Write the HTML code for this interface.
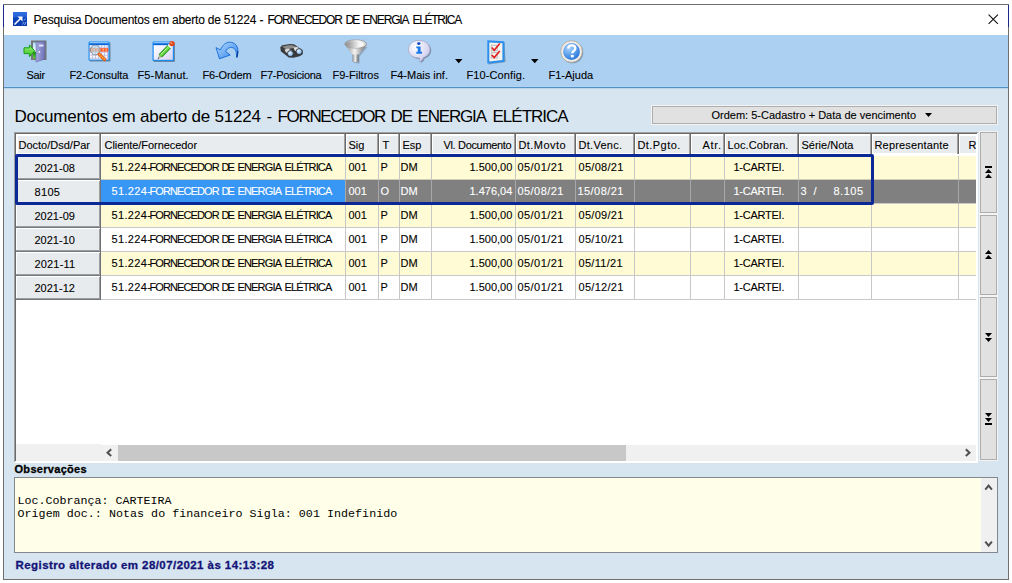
<!DOCTYPE html>
<html><head><meta charset="utf-8"><title>Pesquisa</title><style>
*{margin:0;padding:0;box-sizing:border-box}
html,body{width:1012px;height:583px;background:#fff;overflow:hidden}
body{position:relative;font-family:"Liberation Sans",sans-serif}
.a{position:absolute}
.t{position:absolute;white-space:pre;line-height:1;-webkit-text-stroke:0.1px currentColor}
svg{position:absolute;overflow:visible}
</style></head><body>
<div class="a" style="left:3px;top:4px;width:1006px;height:576px;background:#6f6f6f;"></div>
<div class="a" style="left:4px;top:5px;width:1004px;height:574px;background:#ffffff;"></div>
<div class="a" style="left:3px;top:5px;width:1px;height:22px;background:#1c2a8a;"></div>
<div class="a" style="left:1008px;top:5px;width:1px;height:22px;background:#1c2a8a;"></div>
<svg style="left:13px;top:12px" width="14" height="14" viewBox="0 0 14 14">
<defs><linearGradient id="gTi" x1="0" y1="0" x2="0" y2="1"><stop offset="0" stop-color="#2e6fe0"/><stop offset="0.3" stop-color="#2a62d8"/><stop offset="0.45" stop-color="#0a44b8"/><stop offset="1" stop-color="#0a3aa8"/></linearGradient></defs><rect x="0" y="0" width="14" height="14" fill="url(#gTi)"/>
<path d="M1.5 12.5 L8.5 5.5" stroke="#fff" stroke-width="1.6"/><path d="M4.5 4.5 H9.5 V9.5 Z" fill="#fff"/>
<path d="M9.5 12.5 l1.5 -2.5 M11.5 13 l1.5 -3 M11 8.5 l1.5 -2" stroke="#8aaae8" stroke-width="1"/>
</svg>
<div class="t" style="left:33.5px;top:14px;font-size:12px;color:#000;font-weight:400;letter-spacing:-0.216px;font-family:'Liberation Sans';">Pesquisa Documentos em aberto de 51224</div>
<div class="t" style="left:259.5px;top:14px;font-size:12px;color:#000;font-weight:400;letter-spacing:0.000px;font-family:'Liberation Sans';">-</div>
<div class="t" style="left:267.5px;top:14px;font-size:12px;color:#000;font-weight:400;letter-spacing:-1.111px;font-family:'Liberation Sans';">FORNECEDOR</div>
<div class="t" style="left:345.5px;top:14px;font-size:12px;color:#000;font-weight:400;letter-spacing:-2.000px;font-family:'Liberation Sans';">DE</div>
<div class="t" style="left:362.5px;top:14px;font-size:12px;color:#000;font-weight:400;letter-spacing:-1.167px;font-family:'Liberation Sans';">ENERGIA</div>
<div class="t" style="left:412.5px;top:14px;font-size:12px;color:#000;font-weight:400;letter-spacing:-1.286px;font-family:'Liberation Sans';">ELÉTRICA</div>
<svg style="left:988px;top:14px" width="11" height="11" viewBox="0 0 11 11"><path d="M0.6 0.6 L9.9 9.9 M9.9 0.6 L0.6 9.9" stroke="#111" stroke-width="1.1"/></svg>
<div class="a" style="left:4px;top:35px;width:1004px;height:52px;background:#acd0f2;"></div>
<div class="a" style="left:4px;top:86px;width:1004px;height:1px;background:#b2d3f2;"></div>
<div class="a" style="left:4px;top:87px;width:1004px;height:1px;background:#4f92ca;"></div>
<div class="a" style="left:4px;top:88px;width:1004px;height:1px;background:#b9d5ec;"></div>
<div class="a" style="left:4px;top:89px;width:1004px;height:490px;background:#d6e5ef;"></div>
<svg style="left:0;top:0" width="1012" height="90" viewBox="0 0 1012 90">
<defs>
<linearGradient id="gGreen" x1="0" y1="0" x2="0" y2="1"><stop offset="0" stop-color="#9af07a"/><stop offset="1" stop-color="#3cc020"/></linearGradient>
<linearGradient id="gDoor" x1="0" y1="0" x2="1" y2="0"><stop offset="0" stop-color="#a4a8e0"/><stop offset="1" stop-color="#6e72b8"/></linearGradient>
<linearGradient id="gWin" x1="0" y1="0" x2="1" y2="1"><stop offset="0" stop-color="#ffffff"/><stop offset="1" stop-color="#d8d4f4"/></linearGradient>
<linearGradient id="gSky" x1="0" y1="0" x2="0" y2="1"><stop offset="0" stop-color="#a8e0ff"/><stop offset="0.55" stop-color="#ffffff"/><stop offset="0.6" stop-color="#1a8a10"/><stop offset="1" stop-color="#60d040"/></linearGradient>
<linearGradient id="gPencil" x1="0" y1="0" x2="1" y2="1"><stop offset="0" stop-color="#9cf080"/><stop offset="1" stop-color="#2a9a18"/></linearGradient>
<linearGradient id="gArrow" x1="0" y1="0" x2="1" y2="1"><stop offset="0" stop-color="#b8dcff"/><stop offset="1" stop-color="#2a80e8"/></linearGradient>
<linearGradient id="gFunnel" x1="0" y1="0" x2="1" y2="0"><stop offset="0" stop-color="#8a8a8a"/><stop offset="0.45" stop-color="#f4f4f4"/><stop offset="1" stop-color="#6a6a6a"/></linearGradient>
<linearGradient id="gFunTop" x1="0" y1="0" x2="1" y2="0"><stop offset="0" stop-color="#9a9a9a"/><stop offset="0.6" stop-color="#ffffff"/><stop offset="1" stop-color="#c8c8c8"/></linearGradient>
<linearGradient id="gFunIn" x1="0" y1="0" x2="1" y2="0"><stop offset="0" stop-color="#8c8c8c"/><stop offset="0.7" stop-color="#f0f0f0"/><stop offset="1" stop-color="#ffffff"/></linearGradient>
<radialGradient id="gHelp" cx="0.35" cy="0.3" r="0.8"><stop offset="0" stop-color="#a8d4ff"/><stop offset="1" stop-color="#1e6fd8"/></radialGradient>
<radialGradient id="gLens" cx="0.4" cy="0.35" r="0.7"><stop offset="0" stop-color="#e8f4ff"/><stop offset="1" stop-color="#6aa8e8"/></radialGradient>
<radialGradient id="gBubble" cx="0.35" cy="0.3" r="0.8"><stop offset="0" stop-color="#ffffff"/><stop offset="1" stop-color="#c4c4ec"/></radialGradient>
</defs>
<!-- Sair -->
<path d="M31 40.5 H46.5 V60 H31 Z" fill="#777"/>
<rect x="33" y="42.5" width="11.5" height="16" fill="url(#gSky)"/>
<path d="M36 42.2 L44.8 41.2 L44.8 59 L36 62 Z" fill="url(#gDoor)" stroke="#5a5ea0" stroke-width="0.5"/>
<rect x="39" y="44.5" width="4.5" height="2" fill="#e4e6ff"/>
<circle cx="39.3" cy="52" r="1" fill="#e8e8f0"/>
<path d="M24 47.8 H29.4 V44.9 L34.7 50.9 L29.4 56.7 V53.6 H24 Z" fill="url(#gGreen)" stroke="#12a012" stroke-width="1"/>
<!-- F2 Consulta -->
<rect x="89.5" y="42.5" width="21" height="19" rx="1" fill="#203040" fill-opacity="0.45"/>
<rect x="88.5" y="41.5" width="21" height="19" rx="1.2" fill="#1a8cf4"/>
<rect x="89.7" y="42.4" width="18.6" height="1" fill="#cfe8ff"/>
<rect x="89.7" y="43.4" width="18.6" height="1.8" fill="#0a64d8"/>
<rect x="89.7" y="45.2" width="18.6" height="14.3" fill="#fbfaff"/>
<path d="M89.7 47.2 H108.3 M89.7 52.2 H108.3 M89.7 55.2 H108.3 M89.7 58.2 H108.3 M92.5 45.2 V59.5 M95.5 45.2 V59.5 M98.5 45.2 V59.5 M101.5 45.2 V59.5 M104.5 45.2 V59.5 M107.5 45.2 V59.5" stroke="#c4c0e4" stroke-width="1"/>
<rect x="89.7" y="48.2" width="18.6" height="3.4" fill="#ff5a24"/>
<path d="M90.5 49.9 H108" stroke="#ffc8a0" stroke-width="1.3" stroke-dasharray="1.5 1.5"/>
<circle cx="95.3" cy="50" r="4.8" fill="#b4e0f4" fill-opacity="0.6" stroke="#8c8c8c" stroke-width="0.9"/>
<path d="M99.2 54.2 L104.6 59.6" stroke="#e85a10" stroke-width="3.3" stroke-linecap="round"/>
<path d="M99.2 54.2 L104.6 59.6" stroke="#ffd84a" stroke-width="1.4" stroke-dasharray="1.2 1"/>
<!-- F5 Manut -->
<rect x="153.5" y="42.5" width="21.5" height="19.5" rx="1" fill="#203040" fill-opacity="0.45"/>
<rect x="152.5" y="41.5" width="21.5" height="19.5" rx="1.2" fill="#1a8cf4"/>
<rect x="153.7" y="42.4" width="19.1" height="1" fill="#cfe8ff"/>
<rect x="153.7" y="43.4" width="19.1" height="1.8" fill="#0a64d8"/>
<rect x="153.7" y="45.2" width="19.1" height="14.6" fill="url(#gWin)"/>
<path d="M157.6 59.2 L159.2 54.6 L161.6 57 Z" fill="#b8b0a0"/>
<path d="M157.6 59.2 L158.3 57.4 L159.3 58.4 Z" fill="#505050"/>
<path d="M160.3 55.8 L169.6 46.4" stroke="#1a8a12" stroke-width="4.6"/>
<path d="M160.3 55.8 L169.6 46.4" stroke="#6ee048" stroke-width="2.8"/>
<path d="M160.8 54.3 L168.6 46.2" stroke="#c0f8a8" stroke-width="0.9"/>
<path d="M169.2 46.8 L171 45" stroke="#f0f0f0" stroke-width="4.6"/>
<circle cx="172" cy="43.6" r="2.7" fill="#e04818"/>
<circle cx="171.4" cy="43" r="1" fill="#ff9070"/>
<!-- F6 Ordem -->
<path d="M219.5 58.8 L216 47.6 L220.4 49.9 C222.5 45 226 42.2 229.7 42.2 C234.5 42.2 238 46 237.9 50.4 C237.8 53 237.3 55 236.6 57.2 C236.5 52 235.8 49.5 233.8 48.3 C231.5 46.8 227.5 47.2 225.6 51.4 L230.2 55 Z" fill="url(#gArrow)" stroke="#1466d8" stroke-width="0.9" stroke-linejoin="round"/>
<path d="M237.8 51 C237.8 53.5 237.5 55.5 236.8 57.5" stroke="#0a3c9a" stroke-width="1.2" fill="none"/>
<!-- F7 Posiciona -->
<path d="M280.3 47.2 L282.2 45.2 L290 43.9 L294 44.2 L302.6 50.2 L302.8 54.2 L299.6 56.2 L293.4 57.8 L288.8 57.6 L280.8 51.2 Z" fill="#3a3a3a"/>
<path d="M282 46.4 L290 45.1 L293.6 45.5 L296.5 47.3 L286.5 49.4 Z" fill="#8e8e8e"/>
<path d="M284.6 49.6 L288.4 48.6 L292.2 51.2 L289.6 54.4 L285.6 52 Z" fill="#d8d8d8"/>
<path d="M293.4 47.6 L297.2 46.9 L300.6 49.4 L298 52.6 L294.6 50.2 Z" fill="#e4e4e4"/>
<circle cx="290.4" cy="53.6" r="3" fill="url(#gLens)" stroke="#2a2a2a" stroke-width="0.8"/>
<circle cx="299.1" cy="51.6" r="3" fill="url(#gLens)" stroke="#2a2a2a" stroke-width="0.8"/>
<!-- F9 Filtros -->
<path d="M345.5 45 L353 55.5 L353 62 L358.5 62.5 L358.5 55.5 L366.5 46 Z" fill="#555" fill-opacity="0.35" transform="translate(1 1)"/>
<path d="M345 44.5 L352.5 55 L358.5 55 L366.5 45 Z" fill="url(#gFunnel)"/>
<rect x="352.5" y="54.5" width="6" height="7.5" fill="url(#gFunnel)"/>
<ellipse cx="355.7" cy="44" rx="11" ry="4.2" fill="url(#gFunTop)" stroke="#8a8a8a" stroke-width="0.6"/>
<ellipse cx="355" cy="44.3" rx="9" ry="3" fill="url(#gFunIn)"/>
<!-- F4 Mais inf -->
<path d="M419 40.5 C426 40.5 430 44.5 430 49.5 C430 53.5 427 56.5 423.5 57.5 C423 59.5 421.5 61 419.5 62 C420 60.5 420 59 419.5 58 C413 58 408.5 54.5 408.5 49.5 C408.5 44.5 412.5 40.5 419 40.5 Z" fill="#404058" fill-opacity="0.45" transform="translate(1.2 1)"/>
<path d="M419 40.5 C426 40.5 430 44.5 430 49.5 C430 53.5 427 56.5 423.5 57.5 C423 59.5 421.5 61 419.5 62 C420 60.5 420 59 419.5 58 C413 58 408.5 54.5 408.5 49.5 C408.5 44.5 412.5 40.5 419 40.5 Z" fill="url(#gBubble)" stroke="#9a9ab8" stroke-width="0.6"/>
<ellipse cx="418.8" cy="43.6" rx="1.7" ry="1.3" fill="#0a48b8"/>
<path d="M416.3 46.4 H420.6 V51.8 H422 V53.8 H416.3 V51.8 H417.8 V48.3 H416.3 Z" fill="#1a78e8"/>
<!-- F10 Config -->
<path d="M488.5 41.5 L504.5 42.5 L505.5 62 L488.5 64.5 Z" fill="#203040" fill-opacity="0.35"/>
<path d="M487.3 40.3 L503.6 41.2 Q504.4 41.3 504.4 42 L504.4 61.2 Q504.4 62 503.6 62.1 L488 63.6 Q487.3 63.7 487.3 63 Z" fill="#2a90ec"/>
<path d="M489.3 42.6 L502.4 43.2 L502.4 59.9 L489.3 61.4 Z" fill="#f6f2ec"/>
<rect x="491.3" y="45.3" width="6" height="5.4" fill="none" stroke="#b8b8b8" stroke-width="0.9"/>
<rect x="491.3" y="52.6" width="6" height="5.4" fill="none" stroke="#b8b8b8" stroke-width="0.9"/>
<path d="M491.8 47.6 L494.2 50.3 L499.8 43.6 M491.8 55 L494.2 57.6 L499.8 50.9" stroke="#e01818" stroke-width="1.5" fill="none"/>
<!-- F1 Ajuda -->
<circle cx="572.5" cy="52.5" r="10.8" fill="#303030" fill-opacity="0.35"/>
<circle cx="571.5" cy="51.5" r="10.8" fill="#f2eee6" stroke="#a8a49c" stroke-width="0.8"/>
<circle cx="571.5" cy="51.5" r="8.4" fill="url(#gHelp)"/>
<path d="M568.3 48.6 C568.3 46.3 570 45.4 571.8 45.4 C573.9 45.4 575.3 46.6 575.3 48.4 C575.3 50.8 572.4 51 572.3 53.3" stroke="#fff" stroke-width="2.4" fill="none"/>
<rect x="570.9" y="54.9" width="2.8" height="2.5" fill="#fff"/>
</svg>
<div class="t" style="left:26.5px;top:70px;font-size:11px;color:#000;font-weight:400;letter-spacing:-0.333px;font-family:'Liberation Sans';">Sair</div>
<div class="t" style="left:69.5px;top:70px;font-size:11px;color:#000;font-weight:400;letter-spacing:-0.100px;font-family:'Liberation Sans';">F2-Consulta</div>
<div class="t" style="left:137.5px;top:70px;font-size:11px;color:#000;font-weight:400;letter-spacing:0.125px;font-family:'Liberation Sans';">F5-Manut.</div>
<div class="t" style="left:202.5px;top:70px;font-size:11px;color:#000;font-weight:400;letter-spacing:-0.143px;font-family:'Liberation Sans';">F6-Ordem</div>
<div class="t" style="left:260.5px;top:70px;font-size:11px;color:#000;font-weight:400;letter-spacing:-0.273px;font-family:'Liberation Sans';">F7-Posiciona</div>
<div class="t" style="left:332.5px;top:70px;font-size:11px;color:#000;font-weight:400;letter-spacing:0.000px;font-family:'Liberation Sans';">F9-Filtros</div>
<div class="t" style="left:390.5px;top:70px;font-size:11px;color:#000;font-weight:400;letter-spacing:0.000px;font-family:'Liberation Sans';">F4-Mais inf.</div>
<div class="t" style="left:466.5px;top:70px;font-size:11px;color:#000;font-weight:400;letter-spacing:0.100px;font-family:'Liberation Sans';">F10-Config.</div>
<div class="t" style="left:548.5px;top:70px;font-size:11px;color:#000;font-weight:400;letter-spacing:0.000px;font-family:'Liberation Sans';">F1-Ajuda</div>
<svg style="left:455px;top:59px" width="8" height="5" viewBox="0 0 8 5"><path d="M0 0 H7.5 L3.75 4.2 Z" fill="#000"/></svg>
<svg style="left:531px;top:59px" width="8" height="5" viewBox="0 0 8 5"><path d="M0 0 H7.5 L3.75 4.2 Z" fill="#000"/></svg>
<div class="t" style="left:14.5px;top:108px;font-size:17px;color:#000;font-weight:400;letter-spacing:-0.214px;font-family:'Liberation Sans';-webkit-text-stroke:0">Documentos em aberto de 51224</div>
<div class="t" style="left:266.5px;top:108px;font-size:17px;color:#000;font-weight:400;letter-spacing:0.000px;font-family:'Liberation Sans';-webkit-text-stroke:0">-</div>
<div class="t" style="left:277.5px;top:108px;font-size:17px;color:#000;font-weight:400;letter-spacing:-1.333px;font-family:'Liberation Sans';-webkit-text-stroke:0">FORNECEDOR</div>
<div class="t" style="left:390.5px;top:108px;font-size:17px;color:#000;font-weight:400;letter-spacing:-1.000px;font-family:'Liberation Sans';-webkit-text-stroke:0">DE</div>
<div class="t" style="left:417.5px;top:108px;font-size:17px;color:#000;font-weight:400;letter-spacing:-1.167px;font-family:'Liberation Sans';-webkit-text-stroke:0">ENERGIA</div>
<div class="t" style="left:492.5px;top:108px;font-size:17px;color:#000;font-weight:400;letter-spacing:-1.000px;font-family:'Liberation Sans';-webkit-text-stroke:0">ELÉTRICA</div>
<div class="a" style="left:651px;top:105px;width:347px;height:20px;background:#f4f4f4;"></div>
<div class="a" style="left:652px;top:106px;width:345px;height:18px;background:#adadad;"></div>
<div class="a" style="left:653px;top:107px;width:343px;height:16px;background:#e1e1e1;"></div>
<div class="t" style="left:711.5px;top:110px;font-size:11px;color:#000;font-weight:400;letter-spacing:0.000px;font-family:'Liberation Sans';">Ordem: 5-Cadastro + Data de vencimento</div>
<svg style="left:925px;top:113px" width="8" height="5" viewBox="0 0 8 5"><path d="M0 0 H7 L3.5 4 Z" fill="#000"/></svg>
<div class="a" style="left:14px;top:132px;width:964px;height:331px;background:#ffffff;"></div>
<div class="a" style="left:14px;top:132px;width:964px;height:1px;background:#a0a0a0;"></div>
<div class="a" style="left:14px;top:132px;width:1px;height:330px;background:#a0a0a0;"></div>
<div class="a" style="left:15px;top:133px;width:962px;height:1px;background:#6a6a6a;"></div>
<div class="a" style="left:15px;top:133px;width:1px;height:328px;background:#6a6a6a;"></div>
<div class="a" style="left:18px;top:136px;width:958px;height:17px;background:#e9ecef;"></div>
<div class="a" style="left:99px;top:134px;width:1px;height:20px;background:#a0a0a0;"></div>
<div class="a" style="left:100px;top:134px;width:1px;height:20px;background:#6a6a6a;"></div>
<div class="a" style="left:101px;top:134px;width:1px;height:20px;background:#ffffff;"></div>
<div class="a" style="left:344px;top:134px;width:1px;height:20px;background:#a0a0a0;"></div>
<div class="a" style="left:345px;top:134px;width:1px;height:20px;background:#6a6a6a;"></div>
<div class="a" style="left:346px;top:134px;width:1px;height:20px;background:#ffffff;"></div>
<div class="a" style="left:377px;top:134px;width:1px;height:20px;background:#a0a0a0;"></div>
<div class="a" style="left:378px;top:134px;width:1px;height:20px;background:#6a6a6a;"></div>
<div class="a" style="left:379px;top:134px;width:1px;height:20px;background:#ffffff;"></div>
<div class="a" style="left:398px;top:134px;width:1px;height:20px;background:#a0a0a0;"></div>
<div class="a" style="left:399px;top:134px;width:1px;height:20px;background:#6a6a6a;"></div>
<div class="a" style="left:400px;top:134px;width:1px;height:20px;background:#ffffff;"></div>
<div class="a" style="left:430px;top:134px;width:1px;height:20px;background:#a0a0a0;"></div>
<div class="a" style="left:431px;top:134px;width:1px;height:20px;background:#6a6a6a;"></div>
<div class="a" style="left:432px;top:134px;width:1px;height:20px;background:#ffffff;"></div>
<div class="a" style="left:514px;top:134px;width:1px;height:20px;background:#a0a0a0;"></div>
<div class="a" style="left:515px;top:134px;width:1px;height:20px;background:#6a6a6a;"></div>
<div class="a" style="left:516px;top:134px;width:1px;height:20px;background:#ffffff;"></div>
<div class="a" style="left:574px;top:134px;width:1px;height:20px;background:#a0a0a0;"></div>
<div class="a" style="left:575px;top:134px;width:1px;height:20px;background:#6a6a6a;"></div>
<div class="a" style="left:576px;top:134px;width:1px;height:20px;background:#ffffff;"></div>
<div class="a" style="left:633px;top:134px;width:1px;height:20px;background:#a0a0a0;"></div>
<div class="a" style="left:634px;top:134px;width:1px;height:20px;background:#6a6a6a;"></div>
<div class="a" style="left:635px;top:134px;width:1px;height:20px;background:#ffffff;"></div>
<div class="a" style="left:689px;top:134px;width:1px;height:20px;background:#a0a0a0;"></div>
<div class="a" style="left:690px;top:134px;width:1px;height:20px;background:#6a6a6a;"></div>
<div class="a" style="left:691px;top:134px;width:1px;height:20px;background:#ffffff;"></div>
<div class="a" style="left:723px;top:134px;width:1px;height:20px;background:#a0a0a0;"></div>
<div class="a" style="left:724px;top:134px;width:1px;height:20px;background:#6a6a6a;"></div>
<div class="a" style="left:725px;top:134px;width:1px;height:20px;background:#ffffff;"></div>
<div class="a" style="left:797px;top:134px;width:1px;height:20px;background:#a0a0a0;"></div>
<div class="a" style="left:798px;top:134px;width:1px;height:20px;background:#6a6a6a;"></div>
<div class="a" style="left:799px;top:134px;width:1px;height:20px;background:#ffffff;"></div>
<div class="a" style="left:870px;top:134px;width:1px;height:20px;background:#a0a0a0;"></div>
<div class="a" style="left:871px;top:134px;width:1px;height:20px;background:#6a6a6a;"></div>
<div class="a" style="left:872px;top:134px;width:1px;height:20px;background:#ffffff;"></div>
<div class="a" style="left:957px;top:134px;width:1px;height:20px;background:#a0a0a0;"></div>
<div class="a" style="left:958px;top:134px;width:1px;height:20px;background:#6a6a6a;"></div>
<div class="a" style="left:959px;top:134px;width:1px;height:20px;background:#ffffff;"></div>
<div class="t" style="left:18.5px;top:140px;font-size:11px;color:#000;font-weight:400;letter-spacing:0.000px;font-family:'Liberation Sans';">Docto/Dsd/Par</div>
<div class="t" style="left:104.5px;top:140px;font-size:11px;color:#000;font-weight:400;letter-spacing:-0.059px;font-family:'Liberation Sans';">Cliente/Fornecedor</div>
<div class="t" style="left:348.5px;top:140px;font-size:11px;color:#000;font-weight:400;letter-spacing:0.000px;font-family:'Liberation Sans';">Sig</div>
<div class="t" style="left:382.5px;top:140px;font-size:11px;color:#000;font-weight:400;letter-spacing:0.000px;font-family:'Liberation Sans';">T</div>
<div class="t" style="left:402.5px;top:140px;font-size:11px;color:#000;font-weight:400;letter-spacing:0.000px;font-family:'Liberation Sans';">Esp</div>
<div class="t" style="left:443.5px;top:140px;font-size:11px;color:#000;font-weight:400;letter-spacing:-0.333px;font-family:'Liberation Sans';">Vl. Documento</div>
<div class="t" style="left:518.5px;top:140px;font-size:11px;color:#000;font-weight:400;letter-spacing:0.429px;font-family:'Liberation Sans';">Dt.Movto</div>
<div class="t" style="left:578.5px;top:140px;font-size:11px;color:#000;font-weight:400;letter-spacing:0.286px;font-family:'Liberation Sans';">Dt.Venc.</div>
<div class="t" style="left:637.5px;top:140px;font-size:11px;color:#000;font-weight:400;letter-spacing:0.429px;font-family:'Liberation Sans';">Dt.Pgto.</div>
<div class="t" style="left:702.5px;top:140px;font-size:11px;color:#000;font-weight:400;letter-spacing:0.667px;font-family:'Liberation Sans';">Atr.</div>
<div class="t" style="left:727.5px;top:140px;font-size:11px;color:#000;font-weight:400;letter-spacing:0.100px;font-family:'Liberation Sans';">Loc.Cobran.</div>
<div class="t" style="left:801.5px;top:140px;font-size:11px;color:#000;font-weight:400;letter-spacing:0.000px;font-family:'Liberation Sans';">Série/Nota</div>
<div class="t" style="left:874.5px;top:140px;font-size:11px;color:#000;font-weight:400;letter-spacing:0.167px;font-family:'Liberation Sans';">Representante</div>
<div class="t" style="left:968.5px;top:140px;font-size:11px;color:#000;font-weight:400;letter-spacing:0.000px;font-family:'Liberation Sans';">R</div>
<div class="a" style="left:16px;top:154px;width:960px;height:290px;background:#ffffff;"></div>
<div class="a" style="left:16px;top:156px;width:84px;height:24px;background:#ffffff;"></div>
<div class="a" style="left:17px;top:157px;width:82px;height:21px;background:#e8ebee;"></div>
<div class="a" style="left:16px;top:178px;width:84px;height:1px;background:#9a9da2;"></div>
<div class="a" style="left:16px;top:179px;width:85px;height:1px;background:#74777c;"></div>
<div class="a" style="left:99px;top:157px;width:1px;height:22px;background:#a0a0a0;"></div>
<div class="a" style="left:100px;top:156px;width:1px;height:24px;background:#6f7276;"></div>
<div class="a" style="left:101px;top:156px;width:875px;height:23px;background:#fffbd4;"></div>
<div class="a" style="left:101px;top:179px;width:875px;height:1px;background:#d0ccbc;"></div>
<div class="a" style="left:345px;top:156px;width:1px;height:24px;background:#c8c8c8;"></div>
<div class="a" style="left:378px;top:156px;width:1px;height:24px;background:#c8c8c8;"></div>
<div class="a" style="left:399px;top:156px;width:1px;height:24px;background:#c8c8c8;"></div>
<div class="a" style="left:431px;top:156px;width:1px;height:24px;background:#c8c8c8;"></div>
<div class="a" style="left:515px;top:156px;width:1px;height:24px;background:#c8c8c8;"></div>
<div class="a" style="left:575px;top:156px;width:1px;height:24px;background:#c8c8c8;"></div>
<div class="a" style="left:634px;top:156px;width:1px;height:24px;background:#c8c8c8;"></div>
<div class="a" style="left:690px;top:156px;width:1px;height:24px;background:#c8c8c8;"></div>
<div class="a" style="left:724px;top:156px;width:1px;height:24px;background:#c8c8c8;"></div>
<div class="a" style="left:798px;top:156px;width:1px;height:24px;background:#c8c8c8;"></div>
<div class="a" style="left:871px;top:156px;width:1px;height:24px;background:#c8c8c8;"></div>
<div class="a" style="left:958px;top:156px;width:1px;height:24px;background:#c8c8c8;"></div>
<div class="t" style="left:34.5px;top:163px;font-size:11px;color:#000;font-weight:400;letter-spacing:0.000px;font-family:'Liberation Sans';">2021-08</div>
<div class="t" style="left:111.5px;top:162px;font-size:11px;color:#000000;font-weight:400;letter-spacing:0.333px;font-family:'Liberation Sans';">51.224-</div>
<div class="t" style="left:149.5px;top:162px;font-size:11px;color:#000000;font-weight:400;letter-spacing:-0.889px;font-family:'Liberation Sans';">FORNECEDOR</div>
<div class="t" style="left:221.5px;top:162px;font-size:11px;color:#000000;font-weight:400;letter-spacing:-2.000px;font-family:'Liberation Sans';">DE</div>
<div class="t" style="left:237.5px;top:162px;font-size:11px;color:#000000;font-weight:400;letter-spacing:-0.833px;font-family:'Liberation Sans';">ENERGIA</div>
<div class="t" style="left:284.5px;top:162px;font-size:11px;color:#000000;font-weight:400;letter-spacing:-0.857px;font-family:'Liberation Sans';">ELÉTRICA</div>
<div class="t" style="left:348.5px;top:162px;font-size:11px;color:#000000;font-weight:400;letter-spacing:0.000px;font-family:'Liberation Sans';">001</div>
<div class="t" style="left:380.5px;top:162px;font-size:11px;color:#000000;font-weight:400;letter-spacing:0.000px;font-family:'Liberation Sans';">P</div>
<div class="t" style="left:400.5px;top:162px;font-size:11px;color:#000000;font-weight:400;letter-spacing:0.000px;font-family:'Liberation Sans';">DM</div>
<div class="t" style="left:469.5px;top:162px;font-size:11px;color:#000000;font-weight:400;letter-spacing:0.000px;font-family:'Liberation Sans';">1.500,00</div>
<div class="t" style="left:517.5px;top:162px;font-size:11px;color:#000000;font-weight:400;letter-spacing:0.429px;font-family:'Liberation Sans';">05/01/21</div>
<div class="t" style="left:578.5px;top:162px;font-size:11px;color:#000000;font-weight:400;letter-spacing:0.286px;font-family:'Liberation Sans';">05/08/21</div>
<div class="t" style="left:733.5px;top:162px;font-size:11px;color:#000000;font-weight:400;letter-spacing:-0.250px;font-family:'Liberation Sans';">1-CARTEI.</div>
<div class="a" style="left:16px;top:180px;width:84px;height:24px;background:#ffffff;"></div>
<div class="a" style="left:17px;top:181px;width:82px;height:21px;background:#e8ebee;"></div>
<div class="a" style="left:16px;top:202px;width:84px;height:1px;background:#9a9da2;"></div>
<div class="a" style="left:16px;top:203px;width:85px;height:1px;background:#74777c;"></div>
<div class="a" style="left:99px;top:181px;width:1px;height:22px;background:#a0a0a0;"></div>
<div class="a" style="left:100px;top:180px;width:1px;height:24px;background:#6f7276;"></div>
<div class="a" style="left:101px;top:180px;width:875px;height:23px;background:#808080;"></div>
<div class="a" style="left:101px;top:203px;width:875px;height:1px;background:#c8c8c8;"></div>
<div class="a" style="left:101px;top:180px;width:244px;height:23px;background:#3896f5;"></div>
<div class="a" style="left:345px;top:180px;width:1px;height:24px;background:#a8a8a8;"></div>
<div class="a" style="left:378px;top:180px;width:1px;height:24px;background:#a8a8a8;"></div>
<div class="a" style="left:399px;top:180px;width:1px;height:24px;background:#a8a8a8;"></div>
<div class="a" style="left:431px;top:180px;width:1px;height:24px;background:#a8a8a8;"></div>
<div class="a" style="left:515px;top:180px;width:1px;height:24px;background:#a8a8a8;"></div>
<div class="a" style="left:575px;top:180px;width:1px;height:24px;background:#a8a8a8;"></div>
<div class="a" style="left:634px;top:180px;width:1px;height:24px;background:#a8a8a8;"></div>
<div class="a" style="left:690px;top:180px;width:1px;height:24px;background:#a8a8a8;"></div>
<div class="a" style="left:724px;top:180px;width:1px;height:24px;background:#a8a8a8;"></div>
<div class="a" style="left:798px;top:180px;width:1px;height:24px;background:#a8a8a8;"></div>
<div class="a" style="left:871px;top:180px;width:1px;height:24px;background:#a8a8a8;"></div>
<div class="a" style="left:958px;top:180px;width:1px;height:24px;background:#a8a8a8;"></div>
<div class="t" style="left:34.5px;top:187px;font-size:11px;color:#000;font-weight:400;letter-spacing:0.333px;font-family:'Liberation Sans';">8105</div>
<div class="t" style="left:111.5px;top:186px;font-size:11px;color:#ffffff;font-weight:400;letter-spacing:0.333px;font-family:'Liberation Sans';">51.224-</div>
<div class="t" style="left:149.5px;top:186px;font-size:11px;color:#ffffff;font-weight:400;letter-spacing:-0.889px;font-family:'Liberation Sans';">FORNECEDOR</div>
<div class="t" style="left:221.5px;top:186px;font-size:11px;color:#ffffff;font-weight:400;letter-spacing:-2.000px;font-family:'Liberation Sans';">DE</div>
<div class="t" style="left:237.5px;top:186px;font-size:11px;color:#ffffff;font-weight:400;letter-spacing:-0.833px;font-family:'Liberation Sans';">ENERGIA</div>
<div class="t" style="left:284.5px;top:186px;font-size:11px;color:#ffffff;font-weight:400;letter-spacing:-0.857px;font-family:'Liberation Sans';">ELÉTRICA</div>
<div class="t" style="left:348.5px;top:186px;font-size:11px;color:#ffffff;font-weight:400;letter-spacing:0.000px;font-family:'Liberation Sans';">001</div>
<div class="t" style="left:380.5px;top:186px;font-size:11px;color:#ffffff;font-weight:400;letter-spacing:0.000px;font-family:'Liberation Sans';">O</div>
<div class="t" style="left:400.5px;top:186px;font-size:11px;color:#ffffff;font-weight:400;letter-spacing:0.000px;font-family:'Liberation Sans';">DM</div>
<div class="t" style="left:469.5px;top:186px;font-size:11px;color:#ffffff;font-weight:400;letter-spacing:0.000px;font-family:'Liberation Sans';">1.476,04</div>
<div class="t" style="left:517.5px;top:186px;font-size:11px;color:#ffffff;font-weight:400;letter-spacing:0.429px;font-family:'Liberation Sans';">05/08/21</div>
<div class="t" style="left:577.5px;top:186px;font-size:11px;color:#ffffff;font-weight:400;letter-spacing:0.429px;font-family:'Liberation Sans';">15/08/21</div>
<div class="t" style="left:733.5px;top:186px;font-size:11px;color:#ffffff;font-weight:400;letter-spacing:-0.250px;font-family:'Liberation Sans';">1-CARTEI.</div>
<div class="t" style="left:800.5px;top:186px;font-size:11px;color:#ffffff;font-weight:400;letter-spacing:0.000px;font-family:'Liberation Sans';">3</div>
<div class="t" style="left:813.5px;top:186px;font-size:11px;color:#ffffff;font-weight:400;letter-spacing:0.000px;font-family:'Liberation Sans';">/</div>
<div class="t" style="left:833.5px;top:186px;font-size:11px;color:#ffffff;font-weight:400;letter-spacing:0.500px;font-family:'Liberation Sans';">8.105</div>
<div class="a" style="left:16px;top:204px;width:84px;height:24px;background:#ffffff;"></div>
<div class="a" style="left:17px;top:205px;width:82px;height:21px;background:#e8ebee;"></div>
<div class="a" style="left:16px;top:226px;width:84px;height:1px;background:#9a9da2;"></div>
<div class="a" style="left:16px;top:227px;width:85px;height:1px;background:#74777c;"></div>
<div class="a" style="left:99px;top:205px;width:1px;height:22px;background:#a0a0a0;"></div>
<div class="a" style="left:100px;top:204px;width:1px;height:24px;background:#6f7276;"></div>
<div class="a" style="left:101px;top:204px;width:875px;height:23px;background:#fffbd4;"></div>
<div class="a" style="left:101px;top:227px;width:875px;height:1px;background:#c8c8c8;"></div>
<div class="a" style="left:345px;top:204px;width:1px;height:24px;background:#c8c8c8;"></div>
<div class="a" style="left:378px;top:204px;width:1px;height:24px;background:#c8c8c8;"></div>
<div class="a" style="left:399px;top:204px;width:1px;height:24px;background:#c8c8c8;"></div>
<div class="a" style="left:431px;top:204px;width:1px;height:24px;background:#c8c8c8;"></div>
<div class="a" style="left:515px;top:204px;width:1px;height:24px;background:#c8c8c8;"></div>
<div class="a" style="left:575px;top:204px;width:1px;height:24px;background:#c8c8c8;"></div>
<div class="a" style="left:634px;top:204px;width:1px;height:24px;background:#c8c8c8;"></div>
<div class="a" style="left:690px;top:204px;width:1px;height:24px;background:#c8c8c8;"></div>
<div class="a" style="left:724px;top:204px;width:1px;height:24px;background:#c8c8c8;"></div>
<div class="a" style="left:798px;top:204px;width:1px;height:24px;background:#c8c8c8;"></div>
<div class="a" style="left:871px;top:204px;width:1px;height:24px;background:#c8c8c8;"></div>
<div class="a" style="left:958px;top:204px;width:1px;height:24px;background:#c8c8c8;"></div>
<div class="t" style="left:34.5px;top:211px;font-size:11px;color:#000;font-weight:400;letter-spacing:0.000px;font-family:'Liberation Sans';">2021-09</div>
<div class="t" style="left:111.5px;top:210px;font-size:11px;color:#000000;font-weight:400;letter-spacing:0.333px;font-family:'Liberation Sans';">51.224-</div>
<div class="t" style="left:149.5px;top:210px;font-size:11px;color:#000000;font-weight:400;letter-spacing:-0.889px;font-family:'Liberation Sans';">FORNECEDOR</div>
<div class="t" style="left:221.5px;top:210px;font-size:11px;color:#000000;font-weight:400;letter-spacing:-2.000px;font-family:'Liberation Sans';">DE</div>
<div class="t" style="left:237.5px;top:210px;font-size:11px;color:#000000;font-weight:400;letter-spacing:-0.833px;font-family:'Liberation Sans';">ENERGIA</div>
<div class="t" style="left:284.5px;top:210px;font-size:11px;color:#000000;font-weight:400;letter-spacing:-0.857px;font-family:'Liberation Sans';">ELÉTRICA</div>
<div class="t" style="left:348.5px;top:210px;font-size:11px;color:#000000;font-weight:400;letter-spacing:0.000px;font-family:'Liberation Sans';">001</div>
<div class="t" style="left:380.5px;top:210px;font-size:11px;color:#000000;font-weight:400;letter-spacing:0.000px;font-family:'Liberation Sans';">P</div>
<div class="t" style="left:400.5px;top:210px;font-size:11px;color:#000000;font-weight:400;letter-spacing:0.000px;font-family:'Liberation Sans';">DM</div>
<div class="t" style="left:469.5px;top:210px;font-size:11px;color:#000000;font-weight:400;letter-spacing:0.000px;font-family:'Liberation Sans';">1.500,00</div>
<div class="t" style="left:517.5px;top:210px;font-size:11px;color:#000000;font-weight:400;letter-spacing:0.429px;font-family:'Liberation Sans';">05/01/21</div>
<div class="t" style="left:578.5px;top:210px;font-size:11px;color:#000000;font-weight:400;letter-spacing:0.286px;font-family:'Liberation Sans';">05/09/21</div>
<div class="t" style="left:733.5px;top:210px;font-size:11px;color:#000000;font-weight:400;letter-spacing:-0.250px;font-family:'Liberation Sans';">1-CARTEI.</div>
<div class="a" style="left:16px;top:228px;width:84px;height:24px;background:#ffffff;"></div>
<div class="a" style="left:17px;top:229px;width:82px;height:21px;background:#e8ebee;"></div>
<div class="a" style="left:16px;top:250px;width:84px;height:1px;background:#9a9da2;"></div>
<div class="a" style="left:16px;top:251px;width:85px;height:1px;background:#74777c;"></div>
<div class="a" style="left:99px;top:229px;width:1px;height:22px;background:#a0a0a0;"></div>
<div class="a" style="left:100px;top:228px;width:1px;height:24px;background:#6f7276;"></div>
<div class="a" style="left:101px;top:228px;width:875px;height:23px;background:#ffffff;"></div>
<div class="a" style="left:101px;top:251px;width:875px;height:1px;background:#c8c8c8;"></div>
<div class="a" style="left:345px;top:228px;width:1px;height:24px;background:#c8c8c8;"></div>
<div class="a" style="left:378px;top:228px;width:1px;height:24px;background:#c8c8c8;"></div>
<div class="a" style="left:399px;top:228px;width:1px;height:24px;background:#c8c8c8;"></div>
<div class="a" style="left:431px;top:228px;width:1px;height:24px;background:#c8c8c8;"></div>
<div class="a" style="left:515px;top:228px;width:1px;height:24px;background:#c8c8c8;"></div>
<div class="a" style="left:575px;top:228px;width:1px;height:24px;background:#c8c8c8;"></div>
<div class="a" style="left:634px;top:228px;width:1px;height:24px;background:#c8c8c8;"></div>
<div class="a" style="left:690px;top:228px;width:1px;height:24px;background:#c8c8c8;"></div>
<div class="a" style="left:724px;top:228px;width:1px;height:24px;background:#c8c8c8;"></div>
<div class="a" style="left:798px;top:228px;width:1px;height:24px;background:#c8c8c8;"></div>
<div class="a" style="left:871px;top:228px;width:1px;height:24px;background:#c8c8c8;"></div>
<div class="a" style="left:958px;top:228px;width:1px;height:24px;background:#c8c8c8;"></div>
<div class="t" style="left:34.5px;top:235px;font-size:11px;color:#000;font-weight:400;letter-spacing:0.000px;font-family:'Liberation Sans';">2021-10</div>
<div class="t" style="left:111.5px;top:234px;font-size:11px;color:#000000;font-weight:400;letter-spacing:0.333px;font-family:'Liberation Sans';">51.224-</div>
<div class="t" style="left:149.5px;top:234px;font-size:11px;color:#000000;font-weight:400;letter-spacing:-0.889px;font-family:'Liberation Sans';">FORNECEDOR</div>
<div class="t" style="left:221.5px;top:234px;font-size:11px;color:#000000;font-weight:400;letter-spacing:-2.000px;font-family:'Liberation Sans';">DE</div>
<div class="t" style="left:237.5px;top:234px;font-size:11px;color:#000000;font-weight:400;letter-spacing:-0.833px;font-family:'Liberation Sans';">ENERGIA</div>
<div class="t" style="left:284.5px;top:234px;font-size:11px;color:#000000;font-weight:400;letter-spacing:-0.857px;font-family:'Liberation Sans';">ELÉTRICA</div>
<div class="t" style="left:348.5px;top:234px;font-size:11px;color:#000000;font-weight:400;letter-spacing:0.000px;font-family:'Liberation Sans';">001</div>
<div class="t" style="left:380.5px;top:234px;font-size:11px;color:#000000;font-weight:400;letter-spacing:0.000px;font-family:'Liberation Sans';">P</div>
<div class="t" style="left:400.5px;top:234px;font-size:11px;color:#000000;font-weight:400;letter-spacing:0.000px;font-family:'Liberation Sans';">DM</div>
<div class="t" style="left:469.5px;top:234px;font-size:11px;color:#000000;font-weight:400;letter-spacing:0.000px;font-family:'Liberation Sans';">1.500,00</div>
<div class="t" style="left:517.5px;top:234px;font-size:11px;color:#000000;font-weight:400;letter-spacing:0.429px;font-family:'Liberation Sans';">05/01/21</div>
<div class="t" style="left:578.5px;top:234px;font-size:11px;color:#000000;font-weight:400;letter-spacing:0.286px;font-family:'Liberation Sans';">05/10/21</div>
<div class="t" style="left:733.5px;top:234px;font-size:11px;color:#000000;font-weight:400;letter-spacing:-0.250px;font-family:'Liberation Sans';">1-CARTEI.</div>
<div class="a" style="left:16px;top:252px;width:84px;height:24px;background:#ffffff;"></div>
<div class="a" style="left:17px;top:253px;width:82px;height:21px;background:#e8ebee;"></div>
<div class="a" style="left:16px;top:274px;width:84px;height:1px;background:#9a9da2;"></div>
<div class="a" style="left:16px;top:275px;width:85px;height:1px;background:#74777c;"></div>
<div class="a" style="left:99px;top:253px;width:1px;height:22px;background:#a0a0a0;"></div>
<div class="a" style="left:100px;top:252px;width:1px;height:24px;background:#6f7276;"></div>
<div class="a" style="left:101px;top:252px;width:875px;height:23px;background:#fffbd4;"></div>
<div class="a" style="left:101px;top:275px;width:875px;height:1px;background:#c8c8c8;"></div>
<div class="a" style="left:345px;top:252px;width:1px;height:24px;background:#c8c8c8;"></div>
<div class="a" style="left:378px;top:252px;width:1px;height:24px;background:#c8c8c8;"></div>
<div class="a" style="left:399px;top:252px;width:1px;height:24px;background:#c8c8c8;"></div>
<div class="a" style="left:431px;top:252px;width:1px;height:24px;background:#c8c8c8;"></div>
<div class="a" style="left:515px;top:252px;width:1px;height:24px;background:#c8c8c8;"></div>
<div class="a" style="left:575px;top:252px;width:1px;height:24px;background:#c8c8c8;"></div>
<div class="a" style="left:634px;top:252px;width:1px;height:24px;background:#c8c8c8;"></div>
<div class="a" style="left:690px;top:252px;width:1px;height:24px;background:#c8c8c8;"></div>
<div class="a" style="left:724px;top:252px;width:1px;height:24px;background:#c8c8c8;"></div>
<div class="a" style="left:798px;top:252px;width:1px;height:24px;background:#c8c8c8;"></div>
<div class="a" style="left:871px;top:252px;width:1px;height:24px;background:#c8c8c8;"></div>
<div class="a" style="left:958px;top:252px;width:1px;height:24px;background:#c8c8c8;"></div>
<div class="t" style="left:34.5px;top:259px;font-size:11px;color:#000;font-weight:400;letter-spacing:0.167px;font-family:'Liberation Sans';">2021-11</div>
<div class="t" style="left:111.5px;top:258px;font-size:11px;color:#000000;font-weight:400;letter-spacing:0.333px;font-family:'Liberation Sans';">51.224-</div>
<div class="t" style="left:149.5px;top:258px;font-size:11px;color:#000000;font-weight:400;letter-spacing:-0.889px;font-family:'Liberation Sans';">FORNECEDOR</div>
<div class="t" style="left:221.5px;top:258px;font-size:11px;color:#000000;font-weight:400;letter-spacing:-2.000px;font-family:'Liberation Sans';">DE</div>
<div class="t" style="left:237.5px;top:258px;font-size:11px;color:#000000;font-weight:400;letter-spacing:-0.833px;font-family:'Liberation Sans';">ENERGIA</div>
<div class="t" style="left:284.5px;top:258px;font-size:11px;color:#000000;font-weight:400;letter-spacing:-0.857px;font-family:'Liberation Sans';">ELÉTRICA</div>
<div class="t" style="left:348.5px;top:258px;font-size:11px;color:#000000;font-weight:400;letter-spacing:0.000px;font-family:'Liberation Sans';">001</div>
<div class="t" style="left:380.5px;top:258px;font-size:11px;color:#000000;font-weight:400;letter-spacing:0.000px;font-family:'Liberation Sans';">P</div>
<div class="t" style="left:400.5px;top:258px;font-size:11px;color:#000000;font-weight:400;letter-spacing:0.000px;font-family:'Liberation Sans';">DM</div>
<div class="t" style="left:469.5px;top:258px;font-size:11px;color:#000000;font-weight:400;letter-spacing:0.000px;font-family:'Liberation Sans';">1.500,00</div>
<div class="t" style="left:517.5px;top:258px;font-size:11px;color:#000000;font-weight:400;letter-spacing:0.429px;font-family:'Liberation Sans';">05/01/21</div>
<div class="t" style="left:578.5px;top:258px;font-size:11px;color:#000000;font-weight:400;letter-spacing:0.286px;font-family:'Liberation Sans';">05/11/21</div>
<div class="t" style="left:733.5px;top:258px;font-size:11px;color:#000000;font-weight:400;letter-spacing:-0.250px;font-family:'Liberation Sans';">1-CARTEI.</div>
<div class="a" style="left:16px;top:276px;width:84px;height:24px;background:#ffffff;"></div>
<div class="a" style="left:17px;top:277px;width:82px;height:21px;background:#e8ebee;"></div>
<div class="a" style="left:16px;top:298px;width:84px;height:1px;background:#9a9da2;"></div>
<div class="a" style="left:16px;top:299px;width:85px;height:1px;background:#74777c;"></div>
<div class="a" style="left:99px;top:277px;width:1px;height:22px;background:#a0a0a0;"></div>
<div class="a" style="left:100px;top:276px;width:1px;height:24px;background:#6f7276;"></div>
<div class="a" style="left:101px;top:276px;width:875px;height:23px;background:#ffffff;"></div>
<div class="a" style="left:101px;top:299px;width:875px;height:1px;background:#c8c8c8;"></div>
<div class="a" style="left:345px;top:276px;width:1px;height:24px;background:#c8c8c8;"></div>
<div class="a" style="left:378px;top:276px;width:1px;height:24px;background:#c8c8c8;"></div>
<div class="a" style="left:399px;top:276px;width:1px;height:24px;background:#c8c8c8;"></div>
<div class="a" style="left:431px;top:276px;width:1px;height:24px;background:#c8c8c8;"></div>
<div class="a" style="left:515px;top:276px;width:1px;height:24px;background:#c8c8c8;"></div>
<div class="a" style="left:575px;top:276px;width:1px;height:24px;background:#c8c8c8;"></div>
<div class="a" style="left:634px;top:276px;width:1px;height:24px;background:#c8c8c8;"></div>
<div class="a" style="left:690px;top:276px;width:1px;height:24px;background:#c8c8c8;"></div>
<div class="a" style="left:724px;top:276px;width:1px;height:24px;background:#c8c8c8;"></div>
<div class="a" style="left:798px;top:276px;width:1px;height:24px;background:#c8c8c8;"></div>
<div class="a" style="left:871px;top:276px;width:1px;height:24px;background:#c8c8c8;"></div>
<div class="a" style="left:958px;top:276px;width:1px;height:24px;background:#c8c8c8;"></div>
<div class="t" style="left:34.5px;top:283px;font-size:11px;color:#000;font-weight:400;letter-spacing:0.000px;font-family:'Liberation Sans';">2021-12</div>
<div class="t" style="left:111.5px;top:282px;font-size:11px;color:#000000;font-weight:400;letter-spacing:0.333px;font-family:'Liberation Sans';">51.224-</div>
<div class="t" style="left:149.5px;top:282px;font-size:11px;color:#000000;font-weight:400;letter-spacing:-0.889px;font-family:'Liberation Sans';">FORNECEDOR</div>
<div class="t" style="left:221.5px;top:282px;font-size:11px;color:#000000;font-weight:400;letter-spacing:-2.000px;font-family:'Liberation Sans';">DE</div>
<div class="t" style="left:237.5px;top:282px;font-size:11px;color:#000000;font-weight:400;letter-spacing:-0.833px;font-family:'Liberation Sans';">ENERGIA</div>
<div class="t" style="left:284.5px;top:282px;font-size:11px;color:#000000;font-weight:400;letter-spacing:-0.857px;font-family:'Liberation Sans';">ELÉTRICA</div>
<div class="t" style="left:348.5px;top:282px;font-size:11px;color:#000000;font-weight:400;letter-spacing:0.000px;font-family:'Liberation Sans';">001</div>
<div class="t" style="left:380.5px;top:282px;font-size:11px;color:#000000;font-weight:400;letter-spacing:0.000px;font-family:'Liberation Sans';">P</div>
<div class="t" style="left:400.5px;top:282px;font-size:11px;color:#000000;font-weight:400;letter-spacing:0.000px;font-family:'Liberation Sans';">DM</div>
<div class="t" style="left:469.5px;top:282px;font-size:11px;color:#000000;font-weight:400;letter-spacing:0.000px;font-family:'Liberation Sans';">1.500,00</div>
<div class="t" style="left:517.5px;top:282px;font-size:11px;color:#000000;font-weight:400;letter-spacing:0.429px;font-family:'Liberation Sans';">05/01/21</div>
<div class="t" style="left:578.5px;top:282px;font-size:11px;color:#000000;font-weight:400;letter-spacing:0.286px;font-family:'Liberation Sans';">05/12/21</div>
<div class="t" style="left:733.5px;top:282px;font-size:11px;color:#000000;font-weight:400;letter-spacing:-0.250px;font-family:'Liberation Sans';">1-CARTEI.</div>
<div class="a" style="left:15px;top:154px;width:859px;height:51px;border:3px solid #0a2896;border-radius:2px"></div>
<div class="a" style="left:979px;top:131px;width:19px;height:83px;background:#f4f4f4;"></div>
<div class="a" style="left:980px;top:132px;width:17px;height:81px;background:#adadad;"></div>
<div class="a" style="left:981px;top:133px;width:15px;height:79px;background:#e1e1e1;"></div>
<div class="a" style="left:979px;top:214px;width:19px;height:82px;background:#f4f4f4;"></div>
<div class="a" style="left:980px;top:215px;width:17px;height:80px;background:#adadad;"></div>
<div class="a" style="left:981px;top:216px;width:15px;height:78px;background:#e1e1e1;"></div>
<div class="a" style="left:979px;top:296px;width:19px;height:82px;background:#f4f4f4;"></div>
<div class="a" style="left:980px;top:297px;width:17px;height:80px;background:#adadad;"></div>
<div class="a" style="left:981px;top:298px;width:15px;height:78px;background:#e1e1e1;"></div>
<div class="a" style="left:979px;top:378px;width:19px;height:83px;background:#f4f4f4;"></div>
<div class="a" style="left:980px;top:379px;width:17px;height:81px;background:#adadad;"></div>
<div class="a" style="left:981px;top:380px;width:15px;height:79px;background:#e1e1e1;"></div>
<svg style="left:0;top:0" width="1012" height="583" viewBox="0 0 1012 583"><rect x="985" y="166" width="7" height="2" fill="#000"/><path d="M985 173 H992 L988.5 169 Z M985 178 H992 L988.5 174 Z" fill="#000"/><path d="M985 254 H992 L988.5 250 Z M985 259 H992 L988.5 255 Z" fill="#000"/><path d="M985 333 H992 L988.5 337 Z M985 338 H992 L988.5 342 Z" fill="#000"/><path d="M985 413 H992 L988.5 417 Z M985 418 H992 L988.5 422 Z" fill="#000"/><rect x="985" y="423" width="7" height="2" fill="#000"/></svg>
<div class="a" style="left:16px;top:444px;width:85px;height:17px;background:#f0f0f0;"></div>
<div class="a" style="left:101px;top:445px;width:875px;height:16px;background:#f0f0f0;"></div>
<div class="a" style="left:118px;top:445px;width:508px;height:16px;background:#c8c8c8;"></div>
<svg style="left:0;top:0" width="1012" height="583" viewBox="0 0 1012 583"><path d="M111.2 449.3 L107.5 452.7 L111.2 456.1" stroke="#505050" stroke-width="2" fill="none"/><path d="M965.8 449.3 L969.5 452.7 L965.8 456.1" stroke="#505050" stroke-width="2" fill="none"/></svg>
<div class="t" style="left:14.5px;top:464px;font-size:11px;color:#000;font-weight:700;letter-spacing:0.300px;font-family:'Liberation Sans';-webkit-text-stroke:0.3px currentColor">Observações</div>
<div class="a" style="left:14px;top:477px;width:984px;height:76px;background:#828790;"></div>
<div class="a" style="left:15px;top:478px;width:982px;height:74px;background:#fffee8;"></div>
<div class="a" style="left:981px;top:478px;width:16px;height:74px;background:#f0f0f0;"></div>
<svg style="left:0;top:0" width="1012" height="583" viewBox="0 0 1012 583"><path d="M985.3 489.6 L988.6 485.6 L991.9 489.6" stroke="#505050" stroke-width="2" fill="none"/><path d="M985.3 541.6 L988.6 545.6 L991.9 541.6" stroke="#505050" stroke-width="2" fill="none"/></svg>
<div class="t" style="left:17.5px;top:496px;font-size:11.67px;color:#000;font-weight:400;letter-spacing:0.000px;font-family:'Liberation Mono';-webkit-text-stroke:0">Loc.Cobrança: CARTEIRA</div>
<div class="t" style="left:17.5px;top:509px;font-size:11.67px;color:#000;font-weight:400;letter-spacing:0.038px;font-family:'Liberation Mono';-webkit-text-stroke:0">Origem doc.: Notas do financeiro Sigla: 001 Indefinido</div>
<div class="t" style="left:15.5px;top:560px;font-size:11.5px;color:#141478;font-weight:700;letter-spacing:0.429px;font-family:'Liberation Sans';-webkit-text-stroke:0.3px currentColor">Registro alterado em 28/07/2021 às 14:13:28</div>
</body></html>
